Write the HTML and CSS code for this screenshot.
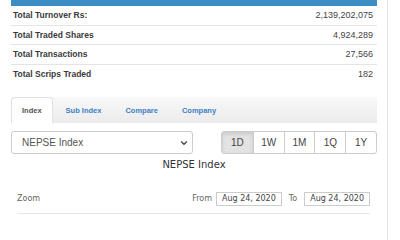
FILE: index.html
```html
<!DOCTYPE html>
<html>
<head>
<meta charset="utf-8">
<link rel="stylesheet" href="styles.css">
</head>
<body>
<div class="wrap">
  <div class="head"></div>
  <div class="stats">
    <div class="row"><span class="lbl">Total Turnover Rs:</span><span class="val">2,139,202,075</span></div>
    <div class="row"><span class="lbl">Total Traded Shares</span><span class="val">4,924,289</span></div>
    <div class="row"><span class="lbl">Total Transactions</span><span class="val">27,566</span></div>
    <div class="row last"><span class="lbl">Total Scrips Traded</span><span class="val">182</span></div>
  </div>
  <div class="tabs">
    <div class="tab active">Index</div>
    <div class="tab">Sub Index</div>
    <div class="tab">Compare</div>
    <div class="tab">Company</div>
  </div>
  <div class="controls">
    <div class="select">
      <span>NEPSE Index</span>
      <svg class="chev" width="8" height="6" viewBox="0 0 8 6"><path d="M1.2 1.5 L4 4.3 L6.8 1.5" fill="none" stroke="#444" stroke-width="1.3"/></svg>
    </div>
    <div class="btns">
      <div class="btn on">1D</div>
      <div class="btn">1W</div>
      <div class="btn">1M</div>
      <div class="btn">1Q</div>
      <div class="btn">1Y</div>
    </div>
  </div>
  <div class="title">NEPSE Index</div>
  <div class="chart">
    <div class="zoomrow">
      <span class="zoom">Zoom</span>
      <div class="range">
        <span class="rl">From</span><span class="date">Aug 24, 2020</span>
        <span class="rl to">To</span><span class="date">Aug 24, 2020</span>
      </div>
    </div>
  </div>
</div>
</body>
</html>
```

FILE: styles.css
```css
* { box-sizing: border-box; }
html, body { margin: 0; padding: 0; background: #fff; }
body { font-family: "Liberation Sans", Arial, sans-serif; }
.wrap {
  width: 388px;
  min-height: 240px;
  padding: 0 10px 0 11px;
  border-right: 1px solid #e6e6e6;
}
.head { height: 6px; background: #3c8dc3; }
.row {
  display: flex;
  justify-content: space-between;
  align-items: center;
  height: 19.5px;
  padding: 0 4px 0 2px;
  border-bottom: 1px solid #e4e4e4;
  font-size: 9px;
  color: #333;
}
.row.last { border-bottom: none; }
.lbl { font-weight: bold; font-size: 8.5px; color: #3a3a3a; }
.val { color: #444; }
.tabs {
  margin-top: 13px;
  height: 26px;
  display: flex;
  background: linear-gradient(#f8f8f8, #ebebeb);
  border-radius: 3px 3px 0 0;
}
.tab {
  display: flex;
  align-items: center;
  padding: 0 11px;
  margin-right: 2px;
  font-size: 7.5px;
  font-weight: bold;
  color: #3a80c3;
}
.tab.active {
  background: #fff;
  color: #555;
  border: 1px solid #e2e2e2;
  border-bottom: none;
  border-radius: 4px 4px 0 0;
  padding: 0 10px;
}
.controls {
  margin-top: 8px;
  display: flex;
  justify-content: space-between;
  align-items: flex-start;
}
.select {
  width: 182px;
  height: 23px;
  border: 1px solid #ccc;
  border-radius: 3px;
  display: flex;
  align-items: center;
  justify-content: space-between;
  padding: 0 4px 0 10px;
  font-size: 10px;
  color: #555;
}
.chev { display: block; }
.btns {
  display: flex;
  height: 22.5px;
  border: 1px solid #ccc;
  border-radius: 3px;
  overflow: hidden;
}
.btn {
  width: 30.8px;
  display: flex;
  align-items: center;
  justify-content: center;
  font-size: 10px;
  color: #444;
  border-left: 1px solid #ccc;
}
.btn:first-child { border-left: none; }
.btn.on {
  background: #e3e3e3;
  box-shadow: inset 0 2px 4px rgba(0,0,0,0.12);
}
.title {
  margin-top: 4px;
  text-align: center;
  font-family: "DejaVu Sans", sans-serif;
  font-size: 10px;
  color: #333;
  height: 14px;
  line-height: 14px;
}
.chart { padding: 0 7px 0 6px; }
.zoomrow {
  margin-top: 19px;
  display: flex;
  justify-content: space-between;
  align-items: center;
  height: 15px;
  box-sizing: content-box;
  padding-bottom: 7px;
  border-bottom: 1px solid #e8e8e8;
}
.zoom { font-family: "DejaVu Sans", sans-serif; font-size: 8px; color: #666; }
.range { display: flex; align-items: center; }
.rl { font-family: "DejaVu Sans", sans-serif; font-size: 8px; color: #666; margin-right: 4px; }
.rl.to { margin-left: 7px; margin-right: 7px; }
.date {
  font-family: "DejaVu Sans", sans-serif;
  font-size: 8px;
  color: #444;
  border: 1px solid #ccc;
  height: 14px;
  line-height: 12px;
  padding: 0 5px;
}
```
